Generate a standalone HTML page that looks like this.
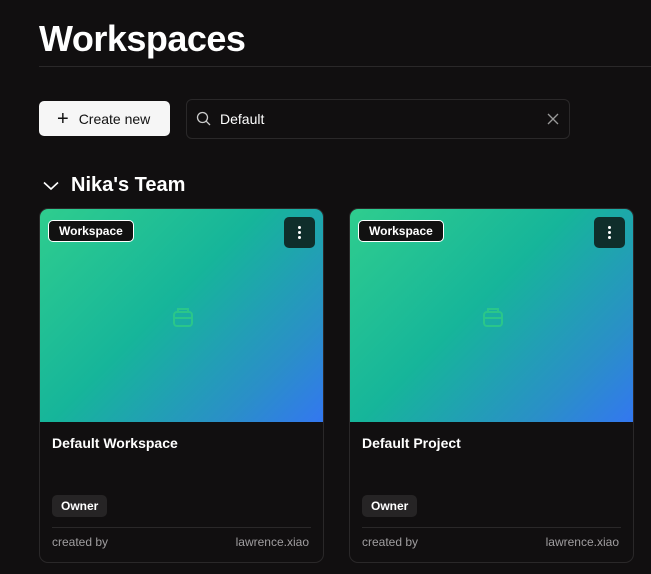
<!DOCTYPE html>
<html><head><style>
*{margin:0;padding:0;box-sizing:border-box}
body{width:651px;height:574px;background:#110f10;font-family:"Liberation Sans",sans-serif;color:#fff;overflow:hidden;position:relative}
h1{position:absolute;left:39px;top:18px;font-size:36px;font-weight:700;letter-spacing:-0.5px}
.hr{position:absolute;left:39px;top:66px;width:612px;height:1px;background:#2a2829}
.btn{position:absolute;left:39px;top:101px;width:131px;height:35px;background:#f6f6f6;border-radius:5px;color:#111;font-size:14px;display:flex;align-items:center;padding-left:18px}
.btn span{font-size:20px;margin-right:10px;font-weight:300;line-height:1}
.search{position:absolute;left:186px;top:99px;width:384px;height:40px;border:1px solid #2a2829;border-radius:6px;font-size:14px;display:flex;align-items:center;padding-left:33px}
.team{position:absolute;left:43px;top:174px;font-size:20px;font-weight:700;display:flex;align-items:center}
.card{position:absolute;top:208px;width:285px;height:355px;border:1px solid #2a2829;border-radius:9px;overflow:hidden}
.img{height:213px;background:linear-gradient(135deg,#2fcd8e 0%,#16b59a 45%,#2a8fc8 80%,#3377f0 100%);position:relative}
.tag{position:absolute;left:8px;top:11px;background:#111;border:1px solid #fff;border-radius:5px;font-size:12px;font-weight:700;padding:3px 10px}
.dots{position:absolute;right:8px;top:8px;width:31px;height:31px;background:#0f2e2b;border-radius:5px;display:flex;flex-direction:column;align-items:center;justify-content:center;gap:2px}
.dots i{width:3px;height:3px;background:#fff;border-radius:50%}
.ico{position:absolute;left:132px;top:97px}
.title{position:absolute;left:12px;top:226px;font-size:14px;font-weight:700}
.owner{position:absolute;left:12px;top:286px;background:#262425;border-radius:5px;font-size:12px;font-weight:700;padding:4px 9px}
.sep{position:absolute;left:12px;right:12px;top:318px;height:1px;background:#2a2829}
.foot{position:absolute;left:12px;right:14px;top:326px;font-size:12px;color:#a09ea0;display:flex;justify-content:space-between}
</style></head><body>
<h1>Workspaces</h1>
<div class="hr"></div>
<div class="btn"><span>+</span>Create new</div>
<div class="search">
<svg style="position:absolute;left:9px;top:11px" width="15" height="15" viewBox="0 0 15 15"><circle cx="6.5" cy="6.5" r="5" fill="none" stroke="#ccc" stroke-width="1.3"/><path d="M10.2 10.2L14 14" stroke="#ccc" stroke-width="1.3"/></svg>
Default
<svg style="position:absolute;right:10px;top:13px" width="12" height="12" viewBox="0 0 12 12"><path d="M1 1L11 11M11 1L1 11" stroke="#999" stroke-width="1.3"/></svg>
</div>
<div class="team"><svg width="16" height="10" viewBox="0 0 16 10" style="margin-right:12px"><path d="M1 1.5L8 8L15 1.5" fill="none" stroke="#fff" stroke-width="1.6"/></svg>Nika's Team</div>
<div class="card" style="left:39px">
<div class="img"><div class="tag">Workspace</div><div class="dots"><i></i><i></i><i></i></div>
<svg class="ico" width="22" height="22" viewBox="0 0 22 22"><rect x="2" y="6" width="18" height="14" rx="3" fill="none" stroke="#2ac68a" stroke-width="2"/><path d="M6 6V3h10v3M2 12h18" stroke="#2ac68a" stroke-width="2" fill="none"/></svg></div>
<div class="title">Default Workspace</div><div class="owner">Owner</div><div class="sep"></div>
<div class="foot"><span>created by</span><span>lawrence.xiao</span></div></div>
<div class="card" style="left:349px">
<div class="img"><div class="tag">Workspace</div><div class="dots"><i></i><i></i><i></i></div>
<svg class="ico" width="22" height="22" viewBox="0 0 22 22"><rect x="2" y="6" width="18" height="14" rx="3" fill="none" stroke="#2ac68a" stroke-width="2"/><path d="M6 6V3h10v3M2 12h18" stroke="#2ac68a" stroke-width="2" fill="none"/></svg></div>
<div class="title">Default Project</div><div class="owner">Owner</div><div class="sep"></div>
<div class="foot"><span>created by</span><span>lawrence.xiao</span></div></div>
</body></html>
